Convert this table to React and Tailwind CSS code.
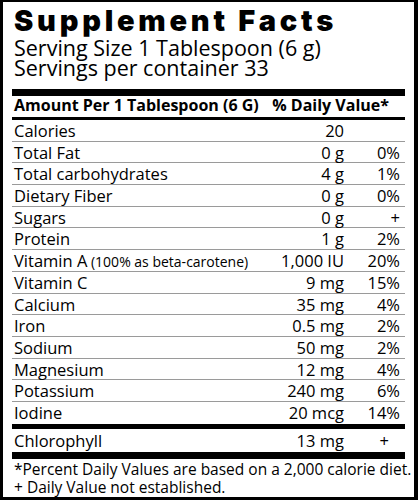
import React from "react";

const rows = [
  ["Calories", "20", ""],
  ["Total Fat", "0 g", "0%"],
  ["Total carbohydrates", "4 g", "1%"],
  ["Dietary Fiber", "0 g", "0%"],
  ["Sugars", "0 g", "+"],
  ["Protein", "1 g", "2%"],
  ["Vitamin A", "1,000 IU", "20%", "(100% as beta-carotene)"],
  ["Vitamin C", "9 mg", "15%"],
  ["Calcium", "35 mg", "4%"],
  ["Iron", "0.5 mg", "2%"],
  ["Sodium", "50 mg", "2%"],
  ["Magnesium", "12 mg", "4%"],
  ["Potassium", "240 mg", "6%"],
  ["Iodine", "20 mcg", "14%"],
];

export default function App() {
  return (
    <div
      className="w-[418px] h-[500px] bg-white text-black border-black border-l-[3px] border-t-[2px] border-r-[4px] border-b-[3px] pl-[9px] pr-[9px] overflow-hidden"
      style={{ fontFamily: '"Open Sans", sans-serif' }}
    >
      <div
        className="mt-[5px] pl-[2px] text-[29px] leading-[28px] font-black tracking-[0.13em] whitespace-nowrap"
        style={{ fontFamily: 'Inter, sans-serif' }}
      >
        Supplement Facts
      </div>
      <div className="mt-[3px] pl-[2px] text-[21.5px] leading-[20px] whitespace-nowrap">
        Serving Size 1 Tablespoon (6 g)
      </div>
      <div className="pl-[2px] text-[21.5px] leading-[20px] whitespace-nowrap">
        Servings per container 33
      </div>
      <div className="mt-[11px] h-[7px] bg-black" />
      <div className="flex pl-[2px] text-[16px] leading-[18px] font-bold whitespace-nowrap">
        <span className="flex-1">Amount Per 1 Tablespoon (6 G)</span>
        <span className="pr-[16px]">% Daily Value*</span>
      </div>
      <div className="mt-[3px] h-[3px] bg-black" />
      {rows.map((r, i) => (
        <div
          key={r[0]}
          className={
            "flex h-[21.7px] pt-[2px] pl-[2px] text-[16.5px] leading-[18.7px] whitespace-nowrap " +
            (i < rows.length - 1 ? "border-b border-[#9a9a9a]" : "")
          }
        >
          <span className="flex-1">
            {r[0]}
            {r[3] ? <span className="text-[14px]"> {r[3]}</span> : null}
          </span>
          <span className="w-[90px] text-right">{r[1]}</span>
          <span className="w-[61px] pr-[5px] text-right">{r[2]}</span>
        </div>
      ))}
      <div className="h-[5px] bg-black" />
      <div className="flex h-[23px] pt-[2px] pl-[2px] text-[16.5px] leading-[19px] whitespace-nowrap">
        <span className="flex-1">Chlorophyll</span>
        <span className="w-[90px] text-right">13 mg</span>
        <span className="w-[61px] pr-[16px] text-right">+</span>
      </div>
      <div className="h-[7px] bg-black" />
      <div className="pl-[2px] text-[15.5px] leading-[18px] mt-[1px] whitespace-nowrap">
        *Percent Daily Values are based on a 2,000 calorie diet.
      </div>
      <div className="pl-[2px] text-[15.5px] leading-[18px] whitespace-nowrap">
        + Daily Value not established.
      </div>
    </div>
  );
}
